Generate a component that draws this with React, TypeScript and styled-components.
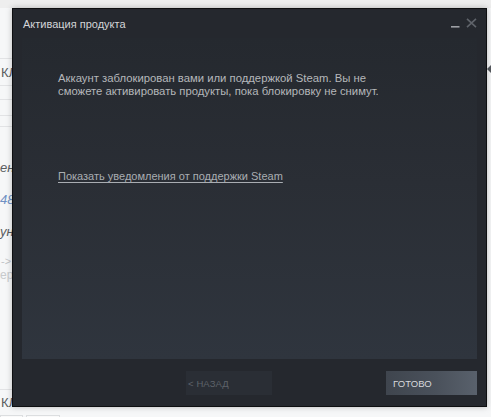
import React from "react";
import styled, { createGlobalStyle } from "styled-components";

const Global = createGlobalStyle`
  html, body { margin: 0; padding: 0; }
  body { width: 491px; height: 417px; overflow: hidden; background: #f4f5f6; font-family: "Liberation Sans", Arial, sans-serif; }
`;

const Page = styled.div`
  position: relative;
  width: 491px;
  height: 417px;
  overflow: hidden;
  display: flex;
  flex-direction: column;
  background: #f6f7f8;
`;

const TopStrip = styled.div`
  height: 8px;
  background: #eeeeee;
  flex: none;
`;

const Body = styled.div`
  flex: 1;
  display: flex;
  justify-content: space-between;
`;

const LeftCol = styled.div`
  width: 60px;
  display: flex;
  flex-direction: column;
  padding-top: 50px;
`;

const BgRow = styled.div<{ $h: number; $line?: boolean }>`
  height: ${(p) => p.$h}px;
  flex: none;
  box-sizing: border-box;
  border-top: ${(p) => (p.$line ? "1px solid #e2e3e5" : "none")};
  display: flex;
  align-items: center;
  width: 60px;
  white-space: nowrap;
`;

const BgText = styled.span<{ $color?: string; $italic?: boolean; $size?: number; $pad?: number }>`
  font-size: ${(p) => p.$size ?? 13}px;
  color: ${(p) => p.$color ?? "#5a5d61"};
  font-style: ${(p) => (p.$italic ? "italic" : "normal")};
  flex: none;
  padding-left: ${(p) => p.$pad ?? 1}px;
`;

const BottomBoxes = styled.div`
  margin-top: auto;
  height: 10px;
  display: flex;
  gap: 3px;
  flex: none;
`;

const Box = styled.div<{ $w: number }>`
  width: ${(p) => p.$w}px;
  border: 1px solid #dcdee0;
  border-bottom: none;
  box-sizing: border-box;
  background: #fafafa;
`;

const RightCol = styled.div`
  width: 4px;
  display: flex;
  flex-direction: column;
  padding-top: 57px;
`;

const RightMark = styled.div`
  width: 0;
  height: 0;
  border-top: 4px solid transparent;
  border-bottom: 4px solid transparent;
  border-right: 4px solid #55595e;
`;

const Dialog = styled.div`
  position: absolute;
  left: 12px;
  top: 8px;
  width: 475px;
  height: 399px;
  box-sizing: border-box;
  border: 1px solid #0e0f11;
  background: #25282e;
  box-shadow: 0 0 6px rgba(0, 0, 0, 0.25);
  display: flex;
  flex-direction: column;
`;

const TitleBar = styled.div`
  height: 29px;
  flex: none;
  display: flex;
  align-items: flex-start;
  justify-content: space-between;
  padding: 8px 9px 0 10px;
  box-sizing: border-box;
`;

const Title = styled.div`
  font-size: 11px;
  color: #d3d5d8;
  line-height: 14px;
`;

const Controls = styled.div`
  display: flex;
  align-items: flex-start;
  gap: 6px;
  margin-top: 1px;
`;

const Panel = styled.div`
  flex: 1;
  margin: 0 9px;
  background: linear-gradient(to bottom, #25292f 0%, #2a2e35 45%, #2f353e 100%);
  padding: 34px 36px 0 36px;
  display: flex;
  flex-direction: column;
  align-items: flex-start;
`;

const Message = styled.p`
  margin: 0;
  white-space: nowrap;
  font-size: 11.3px;
  line-height: 13px;
  color: #b5b7ba;
`;

const Link = styled.a`
  margin-top: 71px;
  font-size: 11px;
  line-height: 14px;
  color: #a9adb2;
  text-decoration: underline;
  text-underline-offset: 2px;
  cursor: pointer;
`;

const Footer = styled.div`
  height: 47px;
  flex: none;
  display: flex;
  justify-content: flex-end;
  align-items: flex-start;
  gap: 114px;
  padding: 12px 9px 0 0;
  box-sizing: border-box;
`;

const Button = styled.button<{ $primary?: boolean; $w: number }>`
  width: ${(p) => p.$w}px;
  height: 24px;
  border: none;
  padding: 0 0 0 ${(p) => (p.$primary ? 7 : 2)}px;
  text-align: left;
  font-family: "Liberation Sans", Arial, sans-serif;
  font-size: 9.5px;
  letter-spacing: 0.1px;
  color: ${(p) => (p.$primary ? "#d7d9dc" : "#5d6269")};
  background: ${(p) =>
    p.$primary
      ? "linear-gradient(to right, #3f454e 0%, #4a515b 55%, #59616c 100%)"
      : "#2a2e35"};
  cursor: pointer;
`;

const Minimize = () => (
  <svg width="9" height="10" viewBox="0 0 9 10">
    <rect x="0" y="8" width="8.5" height="1.6" fill="#9da0a5" />
  </svg>
);

const Close = () => (
  <svg width="11" height="10" viewBox="0 0 11 10">
    <path d="M1 0.8 L10 9.2 M10 0.8 L1 9.2" stroke="#5f636a" strokeWidth="1.6" fill="none" />
  </svg>
);

export default function App() {
  return (
    <>
      <Global />
      <Page>
        <TopStrip />
        <Body>
          <LeftCol>
            <BgRow $h={27} $line>
              <BgText>КЛ</BgText>
            </BgRow>
            <BgRow $h={14} $line />
            <BgRow $h={16} $line />
            <BgRow $h={11} $line />
            <BgRow $h={1} $line />
            <BgRow $h={31} />
            <BgRow $h={18}>
              <BgText $italic $pad={0}>ен</BgText>
            </BgRow>
            <BgRow $h={14} />
            <BgRow $h={18}>
              <BgText $italic $color="#6f91c4" $pad={0}>48</BgText>
            </BgRow>
            <BgRow $h={14} />
            <BgRow $h={18}>
              <BgText $italic $pad={0}>ун</BgText>
            </BgRow>
            <BgRow $h={14} />
            <BgRow $h={14}>
              <BgText $color="#c2c4c7" $size={11} $pad={1}>-&gt;</BgText>
            </BgRow>
            <BgRow $h={14}>
              <BgText $color="#c8cacc" $size={12} $pad={0}>ер</BgText>
            </BgRow>
            <BgRow $h={107} />
            <BgRow $h={26} $line>
              <BgText>КЛ</BgText>
            </BgRow>
            <BottomBoxes>
              <Box $w={58} />
              <Box $w={88} />
            </BottomBoxes>
          </LeftCol>
          <RightCol>
            <RightMark />
          </RightCol>
        </Body>

        <Dialog>
          <TitleBar>
            <Title>Активация продукта</Title>
            <Controls>
              <Minimize />
              <Close />
            </Controls>
          </TitleBar>
          <Panel>
            <Message>
              Аккаунт заблокирован вами или поддержкой Steam. Вы не
              <br />
              сможете активировать продукты, пока блокировку не снимут.
            </Message>
            <Link>Показать уведомления от поддержки Steam</Link>
          </Panel>
          <Footer>
            <Button $w={86}>&lt; НАЗАД</Button>
            <Button $w={91} $primary>
              ГОТОВО
            </Button>
          </Footer>
        </Dialog>
      </Page>
    </>
  );
}
